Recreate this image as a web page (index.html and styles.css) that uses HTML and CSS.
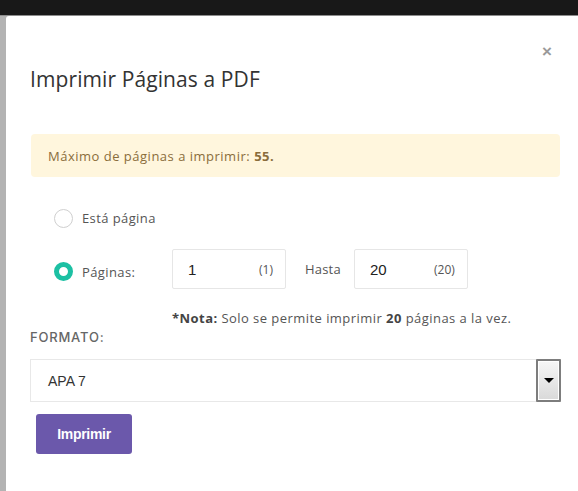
FILE: index.html
```html
<!DOCTYPE html>
<html lang="es">
<head>
<meta charset="utf-8">
<title>Imprimir Páginas a PDF</title>
<link rel="stylesheet" href="styles.css">
</head>
<body>
<div class="topbar"></div>
<div class="stage">
  <div class="modal">
    <div class="modal-header">
      <h4 class="modal-title">Imprimir Páginas a PDF</h4>
      <button class="close" type="button">×</button>
    </div>
    <div class="modal-body">
      <div class="alert">Máximo de páginas a imprimir: <b>55.</b></div>

      <div class="radio-row first">
        <span class="radio"></span>
        <span class="radio-label">Está página</span>
      </div>

      <div class="radio-row second">
        <span class="radio checked"></span>
        <span class="radio-label fixed">Páginas:</span>
        <div class="page-input"><span class="val">1</span><span class="hint">(1)</span></div>
        <span class="hasta">Hasta</span>
        <div class="page-input"><span class="val">20</span><span class="hint">(20)</span></div>
      </div>

      <p class="note"><b>*Nota:</b> Solo se permite imprimir <b>20</b> páginas a la vez.</p>

      <label class="format-label">FORMATO:</label>
      <div class="select">
        <span class="select-value">APA 7</span>
        <span class="select-btn"><span class="caret"></span></span>
      </div>

      <button class="btn-print" type="button">Imprimir</button>
    </div>
  </div>
</div>
</body>
</html>
```
FILE: styles.css
```css
html, body {
  margin: 0;
  padding: 0;
  height: 100%;
}
body {
  background: #b3b3b3;
  font-family: "Open Sans", "Liberation Sans", sans-serif;
  color: #555;
  overflow: hidden;
}
.topbar {
  height: 15px;
  background: #181818;
  border-bottom: 1px solid #8c8c8c;
}
.stage {
  padding-left: 6px;
}
.modal {
  background: #fff;
  border-top-left-radius: 3px;
  height: 475px;
}
.modal-header {
  display: flex;
  justify-content: space-between;
  align-items: flex-start;
  padding: 26px 26px 0 24px;
}
.modal-title {
  margin: 23px 0 0 0;
  font-family: "Open Sans", sans-serif;
  font-weight: 400;
  font-size: 21px;
  line-height: 28px;
  color: #333;
  letter-spacing: 0.1px;
}
.close {
  border: 0;
  background: none;
  padding: 0;
  font-family: "Liberation Sans", sans-serif;
  font-size: 17px;
  line-height: 20px;
  font-weight: 700;
  color: #9a9a9a;
}
.modal-body {
  padding: 41px 18px 0 24px;
}
.alert {
  margin-left: 1px;
  height: 43px;
  display: flex;
  align-items: center;
  padding: 0 17px;
  background: #fff6dd;
  border-radius: 4px;
  color: #8a6d3b;
  font-size: 13px;
  letter-spacing: 0.5px;
}
.alert b {
  font-weight: 700;
  margin-left: 4px;
}
.radio-row {
  display: flex;
  align-items: center;
  padding-left: 24px;
}
.radio-row.first {
  margin-top: 31px;
  height: 20px;
}
.radio-row.second {
  margin-top: 21px;
  height: 40px;
}
.radio {
  width: 19px;
  height: 19px;
  box-sizing: border-box;
  border-radius: 50%;
  border: 1px solid #cfcfcf;
  background: #fff;
  flex: none;
}
.radio.checked {
  border: 5px solid #1cc0a3;
  margin-top: 5px;
}
.radio-label {
  margin-left: 9px;
  font-size: 13px;
  letter-spacing: 0.4px;
  color: #555;
}
.radio-label.fixed {
  width: 90px;
  margin-top: 5px;
}
.page-input {
  width: 114px;
  height: 40px;
  box-sizing: border-box;
  border: 1px solid #e6e6e6;
  border-radius: 2px;
  display: flex;
  align-items: center;
  justify-content: space-between;
  padding: 0 12px 0 15px;
}
.val {
  font-family: "Liberation Sans", sans-serif;
  font-size: 15px;
  color: #222;
}
.hint {
  font-size: 12px;
  color: #555;
}
.hasta {
  font-size: 13px;
  letter-spacing: 0.2px;
  margin: 0 13px 0 19px;
  color: #555;
}
.note {
  margin: 20px 0 0 142px;
  font-size: 13px;
  letter-spacing: 0.45px;
  line-height: 18px;
  color: #555;
  white-space: nowrap;
}
.note b {
  color: #444;
}
.format-label {
  display: block;
  margin-top: 1px;
  font-family: Inter, "Noto Sans", sans-serif;
  font-size: 13px;
  line-height: 18px;
  font-weight: 500;
  color: #666;
  letter-spacing: 0.8px;
}
.select {
  margin-top: 13px;
  margin-right: -1px;
  height: 43px;
  box-sizing: border-box;
  border: 1px solid #e8e8e8;
  display: flex;
  align-items: stretch;
  justify-content: space-between;
}
.select-value {
  display: flex;
  align-items: center;
  padding-left: 17px;
  font-family: "Liberation Sans", sans-serif;
  font-size: 14px;
  color: #333;
}
.select-btn {
  width: 25px;
  margin: -1px -1px -1px 0;
  box-sizing: border-box;
  border: 2px solid #7d7d7d;
  border-radius: 1px;
  background: linear-gradient(#f7f7f7, #d9d9d9);
  box-shadow: inset 0 0 0 1px #fff;
  display: flex;
  align-items: center;
  justify-content: center;
}
.caret {
  width: 0;
  height: 0;
  border-left: 5px solid transparent;
  border-right: 5px solid transparent;
  border-top: 5px solid #000;
}
.btn-print {
  margin: 12px 0 0 6px;
  width: 96px;
  height: 40px;
  border: 0;
  border-radius: 3px;
  background: #6b58ab;
  color: #fff;
  font-family: "Liberation Sans", sans-serif;
  font-weight: 700;
  font-size: 14px;
  letter-spacing: -0.3px;
}
```
